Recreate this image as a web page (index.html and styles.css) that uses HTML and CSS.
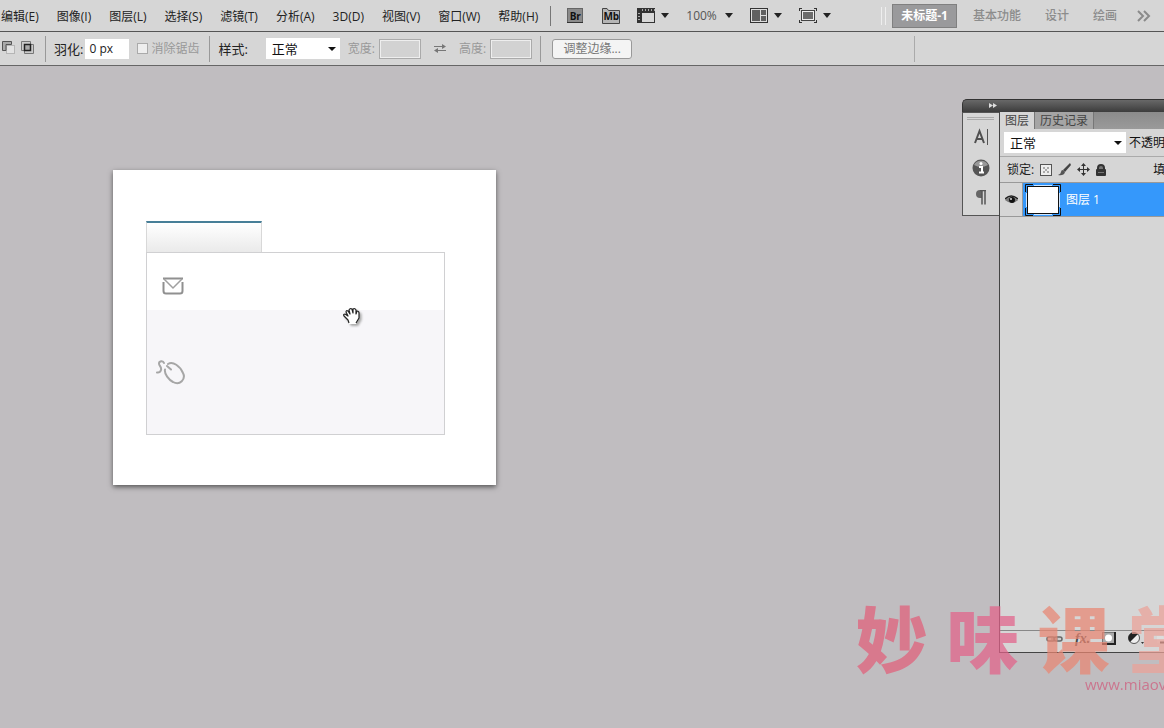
FILE: index.html
```html
<!DOCTYPE html>
<html lang="zh-CN">
<head>
<meta charset="utf-8">
<title>未标题-1</title>
<link rel="stylesheet" href="styles.css">
</head>
<body>
<div class="app">
  <header class="menubar">
    <nav class="menus">
      <button>编辑(E)</button><button>图像(I)</button><button>图层(L)</button><button>选择(S)</button><button>滤镜(T)</button><button>分析(A)</button><button>3D(D)</button><button>视图(V)</button><button>窗口(W)</button><button>帮助(H)</button>
    </nav>
    <div class="tools">
      <button class="launch bridge" aria-label="Bridge"><svg width="16" height="15" viewBox="0 0 16 15"><rect x=".5" y=".5" width="15" height="14" fill="#8b8b8b" stroke="#666"/><path d="M0 14.500H16" stroke="#333"/></svg><span>Br</span></button>
      <button class="launch" aria-label="Mini Bridge"><svg width="18" height="16" viewBox="0 0 18 16"><path d="M.5 15.500V.5H5L6.500 2.500H17.500V15.500Z" fill="#b5b5b5" stroke="#444"/></svg><span>Mb</span></button>
      <button class="drop film" aria-label="查看额外内容"><svg width="18" height="15" viewBox="0 0 18 15"><rect x=".5" y=".5" width="17" height="14" fill="#d8d8d8" stroke="#333"/><path d="M0 0H18V5H5V15H0Z" fill="#333"/><path d="M5 2H18M2 5V14" stroke="#aaa" stroke-dasharray="1 2" stroke-width="2"/></svg><i class="arrow"></i></button>
      <button class="drop zoom"><span>100%</span><i class="arrow"></i></button>
      <button class="drop" aria-label="排列文档"><svg width="18" height="15" viewBox="0 0 18 15"><rect x=".5" y=".5" width="17" height="14" fill="#ddd" stroke="#333"/><path d="M2 2H10V13H2ZM11 2H16V7H11ZM11 8H16V13H11Z" fill="#606060"/></svg><i class="arrow"></i></button>
      <button class="drop" aria-label="屏幕模式"><svg width="18" height="15" viewBox="0 0 18 15"><path d="M0 .5H3M.5 0V3M15 .5H18M17.500 0V3M0 14.500H3M.5 15V12M15 14.500H18M17.500 15V12" stroke="#333"/><rect x="2.500" y="2.500" width="13" height="10" fill="#eee" stroke="#444"/><rect x="4" y="4" width="10" height="7" fill="#6c6c6c"/></svg><i class="arrow"></i></button>
    </div>
    <div class="workspaces">
      <button class="current">未标题-1</button><button>基本功能</button><button>设计</button><button>绘画</button>
      <button class="more" aria-label="更多"><svg width="14" height="12" viewBox="0 0 14 12"><path d="M1 1L6 6L1 11M7 1L12 6L7 11" fill="none" stroke="#8a8a8a" stroke-width="2"/></svg></button>
    </div>
  </header>

  <form class="options">
    <div class="modes">
      <button type="button" aria-label="从选区减去"><svg width="13" height="13" viewBox="0 0 13 13"><rect x="4.500" y="4.500" width="8" height="8" fill="#e3e3e3" stroke="#b5b5b5"/><path d="M.5 9.500V.5H9.500V3.500H4V9.500Z" fill="#aaa" stroke="#555"/></svg></button>
      <button type="button" aria-label="与选区交叉"><svg width="13" height="13" viewBox="0 0 13 13"><path d="M.5 .5H9.500V9.500H.5ZM3.500 3.500H12.500V12.500H3.500Z" fill="#ccc" stroke="#777"/><rect x="3.500" y="3.500" width="6" height="6" fill="#aaa" stroke="#222" stroke-width="1.500"/></svg></button>
    </div>
    <div class="group feather">
      <label for="feather">羽化:</label><input class="field" id="feather" value="0 px">
      <label class="check"><input type="checkbox" disabled>消除锯齿</label>
    </div>
    <div class="group style-group">
      <label for="style">样式:</label>
      <span class="select style-select"><select id="style"><option>正常</option></select></span>
      <span class="dim"><label for="w">宽度:</label><input class="field" id="w" disabled></span>
      <svg class="swap" width="14" height="11" viewBox="0 0 14 11"><path d="M1 3.500H10M4 7.500H13" stroke="#777"/><path d="M9 1L13 3.500L9 6ZM5 5L1 7.500L5 10Z" fill="#777"/></svg>
      <span class="dim"><label for="h">高度:</label><input class="field" id="h" disabled></span>
    </div>
    <div class="group refine-group"><button class="refine" type="button">调整边缘...</button></div>
  </form>

  <main class="workspace">
    <section class="document" aria-label="画布">
      <div class="tab"></div>
      <div class="card">
        <div class="row mail"><svg width="22" height="18" viewBox="0 0 22 18"><path d="M1 1.500H21M1.500 5V14Q1.500 16.500 4 16.500H18Q20.500 16.500 20.500 14V5" fill="none" stroke="#909090" stroke-width="2"/><path d="M2 2L11 11L20 2" fill="none" stroke="#a0a0a0" stroke-width="1.500"/></svg></div>
        <div class="row mouse"><svg width="30" height="25" viewBox="0 0 30 25"><g fill="none" stroke="#a6a6a6" stroke-width="2" stroke-linecap="round"><path d="M8 3C7 0 3 1 3 3.500C3 6 6 7 5 10Q4 13 1 12.500"/><path d="M9 9.500C8 14 13 20 17 22C24 26 30 19 27 13C24 6 17 1 12 4M11 6L15 9.500"/></g></svg></div>
      </div>
      <svg class="hand" width="20" height="20" viewBox="0 0 20 20"><path d="M6 17L5 13L1 9Q0 7 2 7L5 9L2 5Q2 3 4 3L7 7L5 3Q6 1 8 2L10 6V2Q11 0 13 2V7L14 4Q16 3 16 5V11L13 17Z" fill="#fff"/><path d="M6 16L5 13L1 9Q0 7 2 7L5 9L3 5Q3 3 5 4L7 7L6 3Q7 1 9 2L10 6V2Q12 1 13 3V7L14 4Q16 4 16 6V11L13 16" fill="none" stroke="#222" stroke-width="1.200" stroke-linejoin="round"/></svg>
    </section>

    <aside class="dock">
      <div class="dock-head"><svg width="8" height="5" viewBox="0 0 8 5"><path d="M0 0L4 2.500L0 5ZM4 0L8 2.500L4 5Z" fill="#ddd"/></svg></div>
      <div class="dock-body">
        <div class="rail">
          <button aria-label="字符"><svg width="16" height="18" viewBox="0 0 16 18"><path d="M2 15L6.500 3L11 15M3.500 11H10" fill="none" stroke="#505050" stroke-width="2"/><path d="M14.500 1V17" stroke="#555"/></svg></button>
          <button aria-label="信息"><svg width="18" height="18" viewBox="0 0 18 18"><circle cx="9" cy="9" r="8.500" fill="#555"/><path d="M2 6A8 8 0 0 1 16 6Q9 10 2 6" fill="#999"/><circle cx="9" cy="4.500" r="1.500" fill="#fff"/><path d="M7 8H10V13M7 13.500H12" fill="none" stroke="#fff" stroke-width="2"/></svg></button>
          <button aria-label="段落"><svg width="12" height="15" viewBox="0 0 12 15"><path d="M7 0H5Q1 0 1 4T5 8H7Z" fill="#666"/><path d="M5 .5H11M7 0V14.500M10 0V14.500" stroke="#555" stroke-width="1.500"/></svg></button>
        </div>
        <section class="layers">
          <div class="tabs"><button class="active">图层</button><button>历史记录</button></div>
          <div class="blend">
            <span class="select blend-select"><select aria-label="混合模式"><option>正常</option></select></span><span>不透明度:</span>
          </div>
          <div class="locks">
            <span>锁定:</span>
            <svg width="12" height="12" viewBox="0 0 12 12"><rect x=".5" y=".5" width="11" height="11" fill="#eee" stroke="#555"/><path d="M3 3H5V5H3ZM7 3H9V5H7ZM5 5H7V7H5ZM3 7H5V9H3ZM7 7H9V9H7Z" fill="#aaa"/></svg>
            <svg width="13" height="13" viewBox="0 0 13 13"><path d="M12 0L13 2L7 9L5 7Z" fill="#444"/><path d="M5 7L7 9Q6 13 0 12Q3 11 3 9Q3 7 5 7" fill="#555"/></svg>
            <svg width="13" height="13" viewBox="0 0 13 13"><path d="M6.500 1V12M1 6.500H12" stroke="#333"/><path d="M4 3L6.500 0L9 3ZM4 10L6.500 13L9 10ZM3 4L0 6.500L3 9ZM10 4L13 6.500L10 9Z" fill="#333"/></svg>
            <svg width="10" height="12" viewBox="0 0 10 12"><path d="M2 6V4Q2 1 5 1T8 4V6" fill="#777" stroke="#333" stroke-width="2"/><rect y="5" width="10" height="7" rx="1" fill="#333"/><path d="M2 8.500H8" stroke="#777"/></svg>
            <span class="fill-label">填充:</span>
          </div>
          <div class="layer">
            <button class="eye" aria-label="可见性"><svg width="13" height="10" viewBox="0 0 13 10"><path d="M0 5Q6 -1 13 5Q7 11 0 5" fill="#777"/><path d="M0 4Q6 -2 13 4" fill="none" stroke="#222" stroke-width="1.500"/><circle cx="7" cy="5" r="3" fill="#111"/><circle cx="6" cy="4" r="1" fill="#ddd"/></svg></button>
            <svg width="36" height="32" viewBox="0 0 36 32"><rect x="2.500" y="2.500" width="31" height="27" fill="#fff" stroke="#111"/><path d="M8 .5H.5V8M28 .5H35.500V8M.5 24V31.500H8M35.500 24V31.500H28" fill="none" stroke="#111"/><path d="M1.500 9V23M34.500 9V23M9 1.500H27M9 30.500H27" stroke="#cfe6ff"/></svg>
            <span>图层 1</span>
          </div>
          <div class="stack"></div>
          <div class="actions">
            <svg width="17" height="8" viewBox="0 0 17 8"><rect x="1" y="2" width="8" height="4" rx="2" fill="#ccc" stroke="#666" stroke-width="1.500"/><rect x="8" y="2" width="8" height="4" rx="2" fill="#ccc" stroke="#666" stroke-width="1.500"/><path d="M5 4H12" stroke="#777"/></svg>
            <span class="fx">fx.</span>
            <svg width="14" height="13" viewBox="0 0 14 13"><rect x=".5" y=".5" width="12" height="11" fill="#aaa" stroke="#777"/><path d="M0 12H13V0" fill="none" stroke="#222" stroke-width="2"/><circle cx="6.500" cy="6" r="3.500" fill="#fff"/></svg>
            <svg width="16" height="13" viewBox="0 0 16 13"><circle cx="6" cy="6" r="5.500" fill="#eee" stroke="#555"/><path d="M2 10A5.500 5.500 0 0 1 10 2Z" fill="#222"/><path d="M13 10H16L14.500 12Z" fill="#333"/></svg>
            <svg width="17" height="13" viewBox="0 0 17 13"><path d="M1 4H7L8 6H16V11H1Z" fill="#ddd"/><path d="M4 10.500H17" stroke="#222" stroke-width="2"/></svg>
          </div>
        </section>
      </div>
    </aside>

    <div class="watermark">
      <div class="brand"><span>妙</span><span>味</span><span>课</span><span>堂</span></div>
      <div class="site">www.miaov.com</div>
    </div>
  </main>
</div>
</body>
</html>
```
FILE: styles.css
```css
* { box-sizing: border-box; }
body { margin: 0; color: #222; font: 12px/16px "Open Sans", "Noto Sans CJK SC", sans-serif; }
button, input, select { margin: 0; padding: 0; border: 0; background: none; color: inherit; font: inherit; }
svg { display: block; flex: none; }
.app { display: flex; flex-direction: column; height: 100vh; overflow: hidden; white-space: nowrap; }

.menubar { display: flex; align-items: center; height: 32px; background: #d6d6d6; border-bottom: 1px solid #555; }
.menus { display: flex; gap: 18px; padding: 2px 12px 0 1px; }
.tools { display: flex; align-items: center; gap: 17px; height: 20px; padding-left: 16px; border-left: 1px solid #777; }
.launch { display: grid; place-items: center; color: #111; font-size: 10px; font-weight: 700; line-height: 12px; }
.launch > * { grid-area: 1 / 1; }
.bridge { margin-right: 2px; }
.drop { display: flex; align-items: center; gap: 6px; }
.zoom { color: #555; gap: 8px; }
.arrow { border: 4px solid transparent; border-top: 5px solid #222; border-bottom: 0; }
.workspaces { display: flex; align-items: center; gap: 24px; margin-left: auto; padding-right: 13px; color: #8c8c8c; font-weight: 500; }
.workspaces .current { height: 24px; margin-right: -8px; padding: 0 8px; color: #fff; background: #9a9a9c; border: 1px solid #808080; font-weight: 700; }
.workspaces .more { margin-left: -4px; }
.workspaces::before { content: ""; width: 3px; height: 18px; margin-right: -18px; border: solid #eee; border-width: 0 1px; }

.options { display: flex; align-items: center; height: 34px; background: #d6d6d6; border-bottom: 1px solid #666; }
.modes { display: flex; gap: 6px; padding: 0 11px 2px 2px; }
.group { display: flex; align-items: center; height: 26px; padding-left: 8px; border-left: 1px solid #999; }
.group > label { font-size: 13px; }
.field { width: 44px; height: 20px; padding: 0 4px; background: #fff; }
.field:disabled { width: 42px; border: 1px solid #aaa; background: #d2d2d2; box-shadow: inset 0 0 0 1px #eee; }
.feather { gap: 2px; padding-right: 10px; }
.check { display: flex; align-items: center; gap: 3px; margin-left: 6px; color: #999; }
.feather .check { font-size: 12px; }
.check input { appearance: none; width: 11px; height: 11px; background: #eee; border: 1px solid #aaa; }
.style-group { gap: 8px; padding-right: 8px; }
.style-select { width: 74px; margin-left: 10px; }
.dim { display: flex; align-items: center; gap: 4px; color: #999; }
.swap { margin: 0 4px; }
.select { position: relative; flex: none; background: #fff; color: #111; font-size: 13px; }
.select select { display: block; width: 100%; height: 21px; padding: 0 6px; appearance: none; }
.select::after { content: ""; position: absolute; top: 9px; right: 4px; border: 4px solid transparent; border-top-color: #111; border-bottom: 0; pointer-events: none; }
.refine-group { flex: none; width: 375px; padding-left: 11px; border-right: 1px solid #aaa; }
.refine { width: 80px; height: 20px; border: 1px solid #999; border-radius: 3px; background: #f4f4f4; color: #777; line-height: 16px; }

.workspace { position: relative; flex: 1; overflow: hidden; background: #c0bdc0; }
.document { position: absolute; left: 113px; top: 104px; width: 383px; padding: 51px 51px 50px 33px; background: #fff; box-shadow: 0 2px 5px #555; }
.tab { width: 116px; height: 31px; border: 1px solid #d8d8d8; border-top: 2px solid #477f98; border-bottom: 0; background: linear-gradient(#fff, #eaeaea); }
.card { border: 1px solid #d0d0d2; }
.row { display: flex; }
.mail { height: 57px; padding: 24px 15px; }
.mouse { height: 124px; padding: 50px 9px; background: #f7f6f9; }
.hand { position: absolute; left: 230px; top: 137px; filter: drop-shadow(2px 2px 1px #aaa); }

.dock { position: absolute; right: 0; top: 33px; width: 202px; }
.dock-head { height: 13px; padding: 3px 26px; border-radius: 5px 0 0; border: 1px solid #333; border-width: 1px 0 0 1px; background: linear-gradient(#686868, #3c3c3c); }
.dock-body { display: flex; align-items: flex-start; }
.rail { display: flex; flex-direction: column; align-items: center; gap: 13px; width: 37px; height: 104px; padding: 15px 0 0; border: 1px solid #555; border-right: 0; background: linear-gradient(#aaa, #aaa) 4px 4px / 27px 1px no-repeat, linear-gradient(#aaa, #aaa) 4px 6px / 27px 1px no-repeat, #d6d6d6; }
.layers { flex: 1; min-width: 0; overflow: hidden; border: 1px solid #444; border-width: 0 0 1px 1px; background: #d6d6d6; }
.tabs { display: flex; height: 17px; background: linear-gradient(#8b8b8b, #9a9a9a); }
.tabs button { padding: 0 5px; background: #a5a5a5; border-right: 1px solid #777; color: #444; }
.tabs .active { background: #d6d6d6; }
.blend { display: flex; align-items: center; gap: 3px; height: 28px; padding-left: 4px; border-bottom: 1px solid #aaa; color: #111; }
.blend-select { width: 122px; }
.locks { display: flex; align-items: center; gap: 6px; height: 25px; padding-left: 7px; }
.fill-label { margin-left: 41px; color: #111; }
.layer { display: flex; align-items: center; gap: 5px; height: 35px; border: 1px solid #999; border-width: 1px 0; color: #fff; background: #3598fb; }
.eye { display: grid; place-items: center; align-self: stretch; width: 23px; margin-right: -3px; background: #d6d6d6; border-right: 1px solid #999; }
.stack { height: 413px; }
.actions { display: flex; align-items: center; gap: 12px; height: 22px; padding: 0 0 6px 46px; border-top: 1px solid #888; }
.fx { font: italic 700 14px/14px "Liberation Serif", serif; color: #444; }

.watermark { position: absolute; right: -46px; top: 534px; display: grid; gap: 4px; opacity: .72; pointer-events: none; }
.brand { display: grid; grid-template-columns: repeat(4, 91px); color: #e25f7a; font: 900 72px/72px "Noto Sans CJK SC", sans-serif; text-align: center; }
.brand span:nth-child(2) { color: #e3628a; }
.brand span:nth-child(3) { color: #e98773; }
.brand span:nth-child(4) { color: #eba298; }
.site { padding-left: 239px; color: #cf5b7c; font-size: 15px; line-height: 16px; }
```
